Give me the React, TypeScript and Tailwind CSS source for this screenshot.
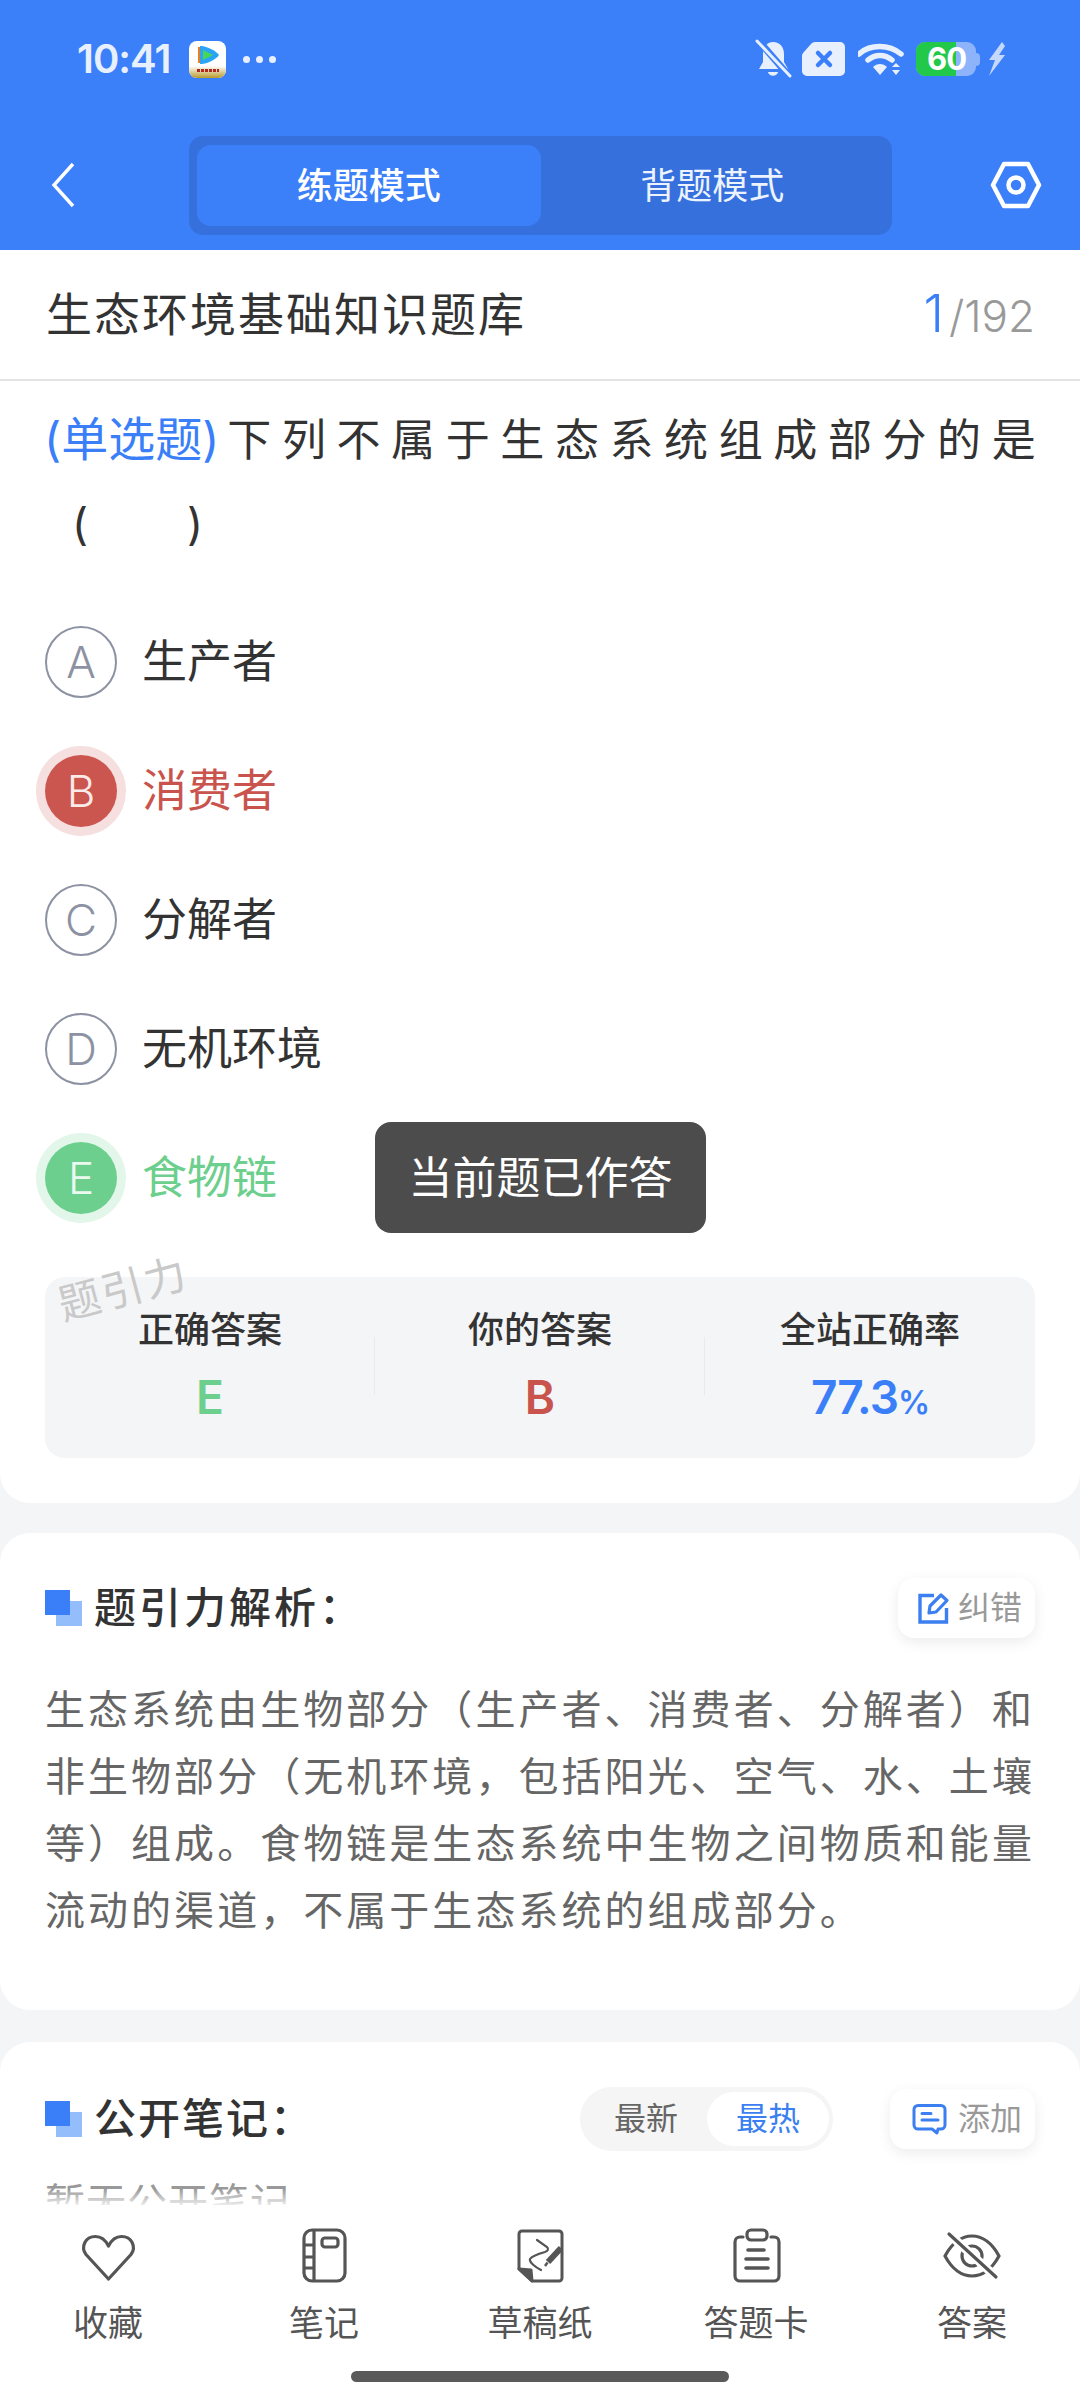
import React from "react";

const Bullet = () => (
  <span className="relative block h-[36px] w-[37px] shrink-0">
    <span className="absolute left-[11px] top-[11px] h-[25px] w-[26px] bg-[#93bdfb]" />
    <span className="absolute left-0 top-0 h-[25px] w-[25px] bg-[#3b7ff8]" />
  </span>
);

const Option = ({ l, t, state }: { l: string; t: string; state?: "bad" | "good" }) => {
  const circle =
    state === "bad"
      ? "bg-[#cb5650] text-[#fbe9e8] border-0 shadow-[0_0_0_9px_#f5dfdf]"
      : state === "good"
        ? "bg-[#6dcf8d] text-[#eafaf0] border-0 shadow-[0_0_0_9px_#e3f6ea]"
        : "border-2 border-[#8d92a3] text-[#8d92a3]";
  const text = state === "bad" ? "text-[#c9544e]" : state === "good" ? "text-[#6dcf8d]" : "text-[#333333]";
  return (
    <div className="flex h-[129px] items-center">
      <div className={`flex h-[72px] w-[72px] shrink-0 items-center justify-center rounded-full text-[44px] font-light ${circle}`}>
        {l}
      </div>
      <div className={`ml-[25px] text-[45px] leading-none ${text}`}>{t}</div>
    </div>
  );
};

const Stat = ({ label, children, divider }: { label: string; children: React.ReactNode; divider?: boolean }) => (
  <div className="relative flex flex-1 flex-col items-center pt-[30px]">
    <div className="text-[36px] font-medium leading-[46px] text-[#333333]">{label}</div>
    <div className="mt-[21px] text-[46px] font-semibold leading-[46px]">{children}</div>
    {divider && <div className="absolute right-0 top-[60px] h-[58px] w-px bg-[#e9eaee]" />}
  </div>
);

const HeartIcon = () => (
  <svg width="60" height="60" viewBox="0 0 60 60" fill="none" stroke="#555555" strokeWidth="3.2" strokeLinejoin="round">
    <path d="M30.5 53 L8 28.5 C2.5 21 7 10.5 17.5 10.5 C23 10.5 27.5 14 30.5 20 C33.5 14 38 10.5 43.5 10.5 C54 10.5 58.5 21 53 28.5 Z" />
  </svg>
);
const NoteIcon = () => (
  <svg width="60" height="60" viewBox="0 0 60 60" fill="none" stroke="#555555" strokeWidth="3.2">
    <rect x="10" y="4" width="41" height="51" rx="8" />
    <path d="M20 4 V55 M10 19 H20 M10 31 H20 M10 42 H20" />
    <rect x="28" y="12" width="16" height="9" rx="3" />
  </svg>
);
const DraftIcon = () => (
  <svg width="60" height="60" viewBox="0 0 60 60" fill="none" stroke="#555555" strokeWidth="3">
    <path d="M12 5 H49 a3 3 0 0 1 3 3 V52 a3 3 0 0 1 -3 3 H22 L9 43 V8 a3 3 0 0 1 3 -3 Z" strokeLinejoin="round" />
    <path d="M9 43 L21 44 L22 55 Z" fill="#555555" strokeLinejoin="round" />
    <path d="M27 14 L37 21 C39 23 38 25 35 26 C28 28 22 30 20 33 C19 36 25 41 31 44" strokeWidth="2.2" strokeLinecap="round" />
    <path d="M51 22 L38 36" strokeWidth="6" />
    <path d="M37.5 36.5 L35 40" strokeWidth="2.5" />
  </svg>
);
const CardIcon = () => (
  <svg width="60" height="60" viewBox="0 0 60 60" fill="none" stroke="#555555" strokeWidth="3.2" strokeLinecap="round">
    <path d="M17 11 H14 a5 5 0 0 0 -5 5 V50 a5 5 0 0 0 5 5 H48 a5 5 0 0 0 5 -5 V16 a5 5 0 0 0 -5 -5 H45" />
    <rect x="21" y="4" width="20" height="10" rx="4" />
    <path d="M22 24 H38 M20 33 H42 M20 42 H42" strokeWidth="3.6" />
  </svg>
);
const EyeOffIcon = () => (
  <svg width="60" height="60" viewBox="0 0 60 60" fill="none" stroke="#555555" strokeWidth="3.2" strokeLinecap="round">
    <path d="M3 30 C10 17 20 10 30 10 C40 10 50 17 57 30 C50 43 40 50 30 50 C20 50 10 43 3 30 Z" />
    <circle cx="30" cy="30" r="10" />
    <path d="M7 8 L54 51" stroke="#ffffff" strokeWidth="9" />
    <path d="M7 8 L54 51" />
  </svg>
);

const NavItem = ({ icon, label }: { icon: React.ReactNode; label: string }) => (
  <div className="flex flex-col items-center">
    {icon}
    <div className="mt-[13px] text-[35px] leading-[48px] text-[#555555]">{label}</div>
  </div>
);

export default function App() {
  return (
    <div
      className="relative flex h-[2400px] w-[1080px] flex-col overflow-hidden bg-[#f4f5f7]"
      style={{ fontFamily: 'Inter, "Noto Sans CJK SC", sans-serif' }}
    >
      {/* Header */}
      <header className="h-[250px] shrink-0 bg-[#3c80f9]">
        <div className="flex h-[118px] items-center pl-[77px] pr-[75px]">
          <span className="text-[40px] font-semibold leading-none tracking-[-1px] text-[#e8f0fe]">10:41</span>
          <svg className="ml-[19px]" width="37" height="37" viewBox="0 0 37 37">
            <defs>
              <linearGradient id="gold" x1="0" y1="0" x2="0" y2="1">
                <stop offset="0" stopColor="#ffffff" />
                <stop offset="1" stopColor="#b99a2c" />
              </linearGradient>
              <clipPath id="appClip">
                <rect width="37" height="37" rx="8" />
              </clipPath>
            </defs>
            <g clipPath="url(#appClip)">
              <rect width="37" height="37" fill="#ffffff" />
              <rect y="25" width="37" height="12" fill="url(#gold)" />
              <path d="M9 6 L9 22 L14 22 L14 6 Z" fill="#f07c1e" />
              <path d="M11 5 C16 4 28 10 30 14 C28 18 16 24 11 23 Z" fill="#2aa4f4" />
              <path d="M14 9 L24 14 L14 19 Z" fill="#46d65a" />
              <path d="M8 29.5 H30" stroke="#b3271e" strokeWidth="3" strokeDasharray="3 1" />
            </g>
          </svg>
          <div className="ml-[17px] flex gap-[6px]">
            <span className="h-[7px] w-[7px] rounded-full bg-[#e8f0fe]" />
            <span className="h-[7px] w-[7px] rounded-full bg-[#e8f0fe]" />
            <span className="h-[7px] w-[7px] rounded-full bg-[#e8f0fe]" />
          </div>
          <div className="ml-auto flex items-center">
            <svg width="37" height="40" viewBox="0 0 37 40">
              <path d="M18 3 C25 3 29 8 29 15 V23 L33 30 H4 L8 23 V15 C8 8 12 3 18 3 Z" fill="#e8f0fe" />
              <path d="M13 33 H23 C22 38 14 38 13 33 Z" fill="#e8f0fe" />
              <path d="M3 1 L35 38" stroke="#3c80f9" strokeWidth="7" />
              <path d="M2 2 L35 37" stroke="#e8f0fe" strokeWidth="3" strokeLinecap="round" />
            </svg>
            <svg className="ml-[10px]" width="44" height="34" viewBox="0 0 44 34">
              <path d="M13 0 H38 a5 5 0 0 1 5 5 V29 a5 5 0 0 1 -5 5 H5 a5 5 0 0 1 -5 -5 V14 a5 5 0 0 1 1.5 -3.5 L9 2 a6 6 0 0 1 4 -2 Z" fill="#e8f0fe" />
              <path d="M16 11 L28 23 M28 11 L16 23" stroke="#3c80f9" strokeWidth="4.5" strokeLinecap="round" />
            </svg>
            <svg className="ml-[12px]" width="48" height="34" viewBox="0 0 48 34">
              <path d="M2 9 C13 -1 32 -1 44 9" transform="translate(-1 3)" fill="none" stroke="#e8f0fe" strokeWidth="5.5" strokeLinecap="round" />
              <path d="M10 17 C17 11 27 11 34 17" transform="translate(0 1)" fill="none" stroke="#e8f0fe" strokeWidth="5.5" strokeLinecap="round" />
              <path d="M15 25 C19 21 25 21 29 25 L22 33 Z" fill="#e8f0fe" />
              <path d="M38 21 L42 25 H34 Z M34 28 H42 L38 33 Z" fill="#e8f0fe" />
            </svg>
            <div className="relative ml-[10px] flex h-[34px] w-[60px] items-center rounded-[9px] bg-[#8db3fb]">
              <div className="h-full w-[40px] rounded-l-[9px] bg-[#22c84a]" />
              <span className="absolute left-[11px] top-0 text-[31px] font-bold leading-[34px] tracking-[-1px] text-white">60</span>
            </div>
            <div className="h-[13px] w-[4px] rounded-r-full bg-[#8db3fb]" />
            <svg className="ml-[7px]" width="18" height="34" viewBox="0 0 18 34">
              <path d="M15 0 L2 18 H8 L2 34 L18 13 H12 L18 4 Z" fill="#c5d8fc" />
            </svg>
          </div>
        </div>
        <div className="relative mt-[18px] flex h-[99px] items-center justify-center">
          <svg className="absolute left-[48px] top-[24px]" width="30" height="50" viewBox="0 0 30 50">
            <path d="M25 4 L6 25 L25 46" fill="none" stroke="#ffffff" strokeWidth="3.4" />
          </svg>
          <div className="absolute left-[189px] top-0 flex h-[99px] w-[703px] items-center rounded-[14px] bg-[#3670dc] px-[8px]">
            <div className="flex h-[81px] flex-1 items-center justify-center rounded-[14px] bg-[#3c80f9] text-[36px] font-medium text-white">
              练题模式
            </div>
            <div className="flex h-[81px] flex-1 items-center justify-center text-[36px] text-[#edf3fe]">背题模式</div>
          </div>
          <svg className="absolute left-[990px] top-[25px]" width="52" height="48" viewBox="0 0 52 48">
            <path d="M14 3 H38 L49 24 L38 45 H14 L3 24 Z" fill="none" stroke="#ffffff" strokeWidth="4.5" strokeLinejoin="round" />
            <circle cx="26" cy="24" r="7.5" fill="none" stroke="#ffffff" strokeWidth="4.5" />
          </svg>
        </div>
      </header>

      {/* Scroll content */}
      <main className="min-h-0 flex-1 overflow-hidden">
        <section className="rounded-b-[30px] bg-white pb-[45px]">
          <div className="flex h-[131px] items-center justify-between border-b-2 border-[#e4e4e4] px-[45px] pb-[2px]">
            <div className="ml-[1px] text-[46px] leading-none tracking-[2px] text-[#333333]">生态环境基础知识题库</div>
            <div className="flex items-baseline">
              <span className="text-[52px] font-light leading-none text-[#3b7ff8]">1</span>
              <span className="ml-[5px] text-[44px] font-light leading-none text-[#999999]">/192</span>
            </div>
          </div>
          <div className="px-[45px] pt-[16px]">
            <div className="text-[44px] leading-[84px] text-[#333333]">
              <div className="flex items-baseline whitespace-nowrap">
                <span className="-ml-[1px] text-[47px] text-[#3b7ff8]">(单选题)</span>
                <span className="ml-[8px] tracking-[10.6px]">下列不属于生态系统组成部分的是</span>
              </div>
              <div className="whitespace-pre pl-[27px]">{"(        )"}</div>
            </div>
            <div className="mt-[31px]">
              <Option l="A" t="生产者" />
              <Option l="B" t="消费者" state="bad" />
              <Option l="C" t="分解者" />
              <Option l="D" t="无机环境" />
              <Option l="E" t="食物链" state="good" />
            </div>
            <div className="relative mt-[35px] flex h-[181px] rounded-[20px] bg-[#f4f5f7]">
              <div className="absolute left-[12px] top-[-12px] -rotate-[15deg] text-[42px] leading-[48px] tracking-[2px] text-[#c9c9c9]">题引力</div>
              <Stat label="正确答案" divider>
                <span className="text-[#6dcf8d]">E</span>
              </Stat>
              <Stat label="你的答案" divider>
                <span className="text-[#c9544e]">B</span>
              </Stat>
              <Stat label="全站正确率">
                <span className="tracking-[-1px] text-[#3b7ff8]">
                  77.3<span className="text-[32px]">%</span>
                </span>
              </Stat>
            </div>
          </div>
        </section>

        <section className="mt-[30px] rounded-[30px] bg-white px-[45px] pb-[66px] pt-[45px]">
          <div className="flex h-[60px] items-center">
            <Bullet />
            <div className="ml-[12px] text-[42px] font-medium leading-none tracking-[3px] text-[#333333]">题引力解析：</div>
            <div className="ml-auto flex h-[60px] w-[137px] items-center gap-[8px] rounded-[16px] bg-white pl-[20px] shadow-[0_4px_14px_rgba(0,0,0,0.08)]">
              <svg width="32" height="32" viewBox="0 0 32 32" fill="none" stroke="#3b7ff0">
                <path d="M16 3.5 H2 V30 H28.5 V16" strokeWidth="3.4" />
                <path d="M11 21 L12 14 L23 3 L29 8.5 L18 20 Z" strokeWidth="3.2" strokeLinejoin="round" />
              </svg>
              <span className="text-[32px] leading-none text-[#999999]">纠错</span>
            </div>
          </div>
          <p className="mt-[38px] text-[40px] leading-[67px] tracking-[3.04px] text-[#666666]">
            生态系统由生物部分（生产者、消费者、分解者）和非生物部分（无机环境，包括阳光、空气、水、土壤等）组成。食物链是生态系统中生物之间物质和能量流动的渠道，不属于生态系统的组成部分。
          </p>
        </section>

        <section className="mt-[32px] rounded-t-[30px] bg-white px-[45px] pt-[47px]">
          <div className="flex h-[60px] items-center">
            <Bullet />
            <div className="ml-[12px] text-[42px] font-medium leading-none tracking-[2px] text-[#333333]">公开笔记：</div>
            <div className="ml-auto flex h-[64px] w-[253px] shrink-0 items-center rounded-full bg-[#f5f5f5] pl-[34px]">
              <span className="whitespace-nowrap text-[32px] leading-none text-[#666666]">最新</span>
              <span className="ml-[29px] flex h-[54px] w-[122px] items-center justify-center whitespace-nowrap rounded-full bg-white text-[32px] leading-none text-[#3b7ff0]">最热</span>
            </div>
            <div className="ml-[57px] flex h-[60px] w-[145px] shrink-0 items-center gap-[11px] rounded-[16px] bg-white pl-[22px] shadow-[0_4px_14px_rgba(0,0,0,0.08)]">
              <svg width="35" height="31" viewBox="0 0 35 31" fill="none" stroke="#3b7ff0" strokeWidth="3" strokeLinecap="round" strokeLinejoin="round">
                <path d="M6 1.5 H29 a4 4 0 0 1 4 4 V21 a4 4 0 0 1 -4 4 H26 L25 29 L20 25 H6 a4 4 0 0 1 -4 -4 V5.5 a4 4 0 0 1 4 -4 Z" />
                <path d="M10 9.5 H19 M10 16 H26" />
              </svg>
              <span className="text-[32px] leading-none text-[#999999]">添加</span>
            </div>
          </div>
          <div className="mt-[26px] text-[40px] leading-[56px] tracking-[1px] text-[#999999]">暂无公开笔记</div>
        </section>
      </main>

      {/* Bottom bar */}
      <nav className="relative flex h-[195px] shrink-0 flex-col bg-white">
        <div className="absolute left-0 top-[-16px] h-[16px] w-full bg-gradient-to-b from-white/0 to-white/80" />
        <div className="grid grid-cols-5 pt-[21px]">
          <NavItem icon={<HeartIcon />} label="收藏" />
          <NavItem icon={<NoteIcon />} label="笔记" />
          <NavItem icon={<DraftIcon />} label="草稿纸" />
          <NavItem icon={<CardIcon />} label="答题卡" />
          <NavItem icon={<EyeOffIcon />} label="答案" />
        </div>
        <div className="mx-auto mt-[24px] h-[11px] w-[378px] rounded-full bg-[#5a5a5a]" />
      </nav>

      {/* Toast */}
      <div className="absolute left-[375px] top-[1122px] flex h-[111px] w-[331px] items-center justify-center rounded-[16px] bg-[#4c4c4c] text-[44px] text-white">
        当前题已作答
      </div>
    </div>
  );
}
